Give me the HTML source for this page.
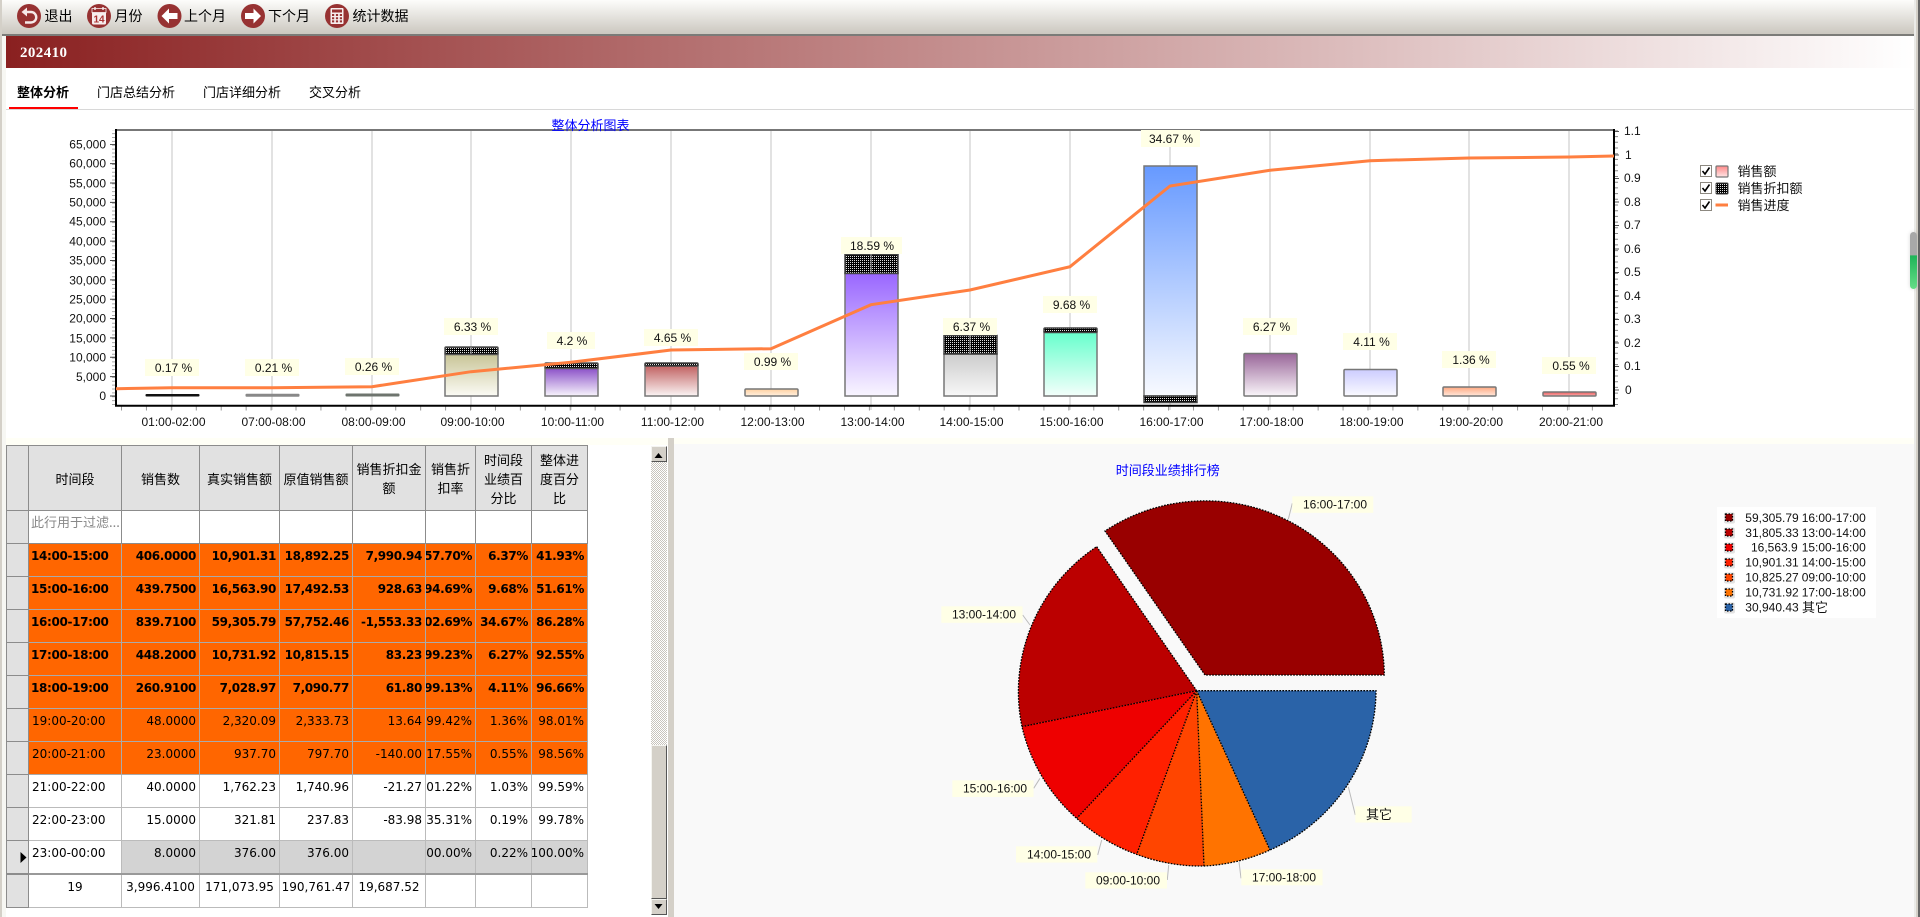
<!DOCTYPE html>
<html lang="zh"><head><meta charset="utf-8"><title>整体分析</title>
<style>
html,body{margin:0;padding:0;width:1920px;height:917px;overflow:hidden;background:#fff}
body{position:relative;font-family:"WenQuanYi Zen Hei","Noto Sans CJK SC",sans-serif;font-size:13px;color:#000}
.a{position:absolute}
svg{position:absolute;left:0;top:0}
svg text{font-family:"Liberation Sans","WenQuanYi Zen Hei",sans-serif;font-size:12px;fill:#111}
svg text.c{font-family:"WenQuanYi Zen Hei","Noto Sans CJK SC",sans-serif;font-size:13px}
.tb{font-family:"WenQuanYi Zen Hei","Noto Sans CJK SC",sans-serif;font-size:14px;position:absolute;top:7px;line-height:18px;white-space:nowrap}
.tab{position:absolute;top:84px;line-height:16px;font-size:13px;white-space:nowrap}
table{position:absolute;left:6px;top:445px;border-collapse:collapse;table-layout:fixed;width:581px;background:#fff}
td{padding:0;border:1px solid #aaa;overflow:hidden;white-space:nowrap;vertical-align:top;height:33px;box-sizing:border-box}
td.h{background:#e1e1e1;border-color:#8c8c8c;text-align:center;vertical-align:middle;line-height:19px;font-size:13px;height:65px}
td.r{background:#e1e1e1;border-color:#8c8c8c}
td i{font-style:normal;display:flex;justify-content:flex-end;padding:4px 3px 0 0;font:12px/16px "DejaVu Sans",sans-serif;overflow:hidden}
td.t i{justify-content:flex-start;padding:4px 0 0 3px}
td.m i{justify-content:center;padding:4px 0 0 0}
tr.o td:not(.r){background:#f60;border-color:#aaa}
tr.b i{font-weight:bold;letter-spacing:-.35px}
tr.b td.t i{padding-left:2px}
tr.g td:not(.r):not(.t){background:#d3d3d3}
td.f{color:#888;font-size:13px;line-height:16px;padding:3px 0 0 2px;border-color:#8c8c8c}
tr.w td{border-color:#bbb}
tr.w td.r{border-color:#8c8c8c}
tr.s td{border-top:2px solid #999}
.sb{position:absolute;left:651px;width:15.5px;background:#d4d0c8;box-sizing:border-box;border:1px solid;border-color:#f4f4f0 #555 #555 #f4f4f0}
</style></head><body>
<!-- frame -->
<div class="a" style="left:0;top:0;width:2px;height:917px;background:#d4d0c8"></div>
<div class="a" style="left:2px;top:0;width:4px;height:917px;background:#f7f7f3"></div>
<div class="a" style="left:2px;top:0;width:1912px;height:34px;background:linear-gradient(#fdfdfb,#cbc7bf)"></div>
<div class="a" style="left:2px;top:34px;width:1912px;height:1.5px;background:#7b7b78"></div>
<div class="a" style="left:6px;top:36px;width:1908px;height:32px;background:linear-gradient(90deg,#8a2020,#fff);color:#fff;font:bold 15px/34px 'Liberation Serif',serif;letter-spacing:.4px"><span style="position:absolute;left:14px;top:0">202410</span></div>
<div class="a" style="left:6px;top:109px;width:1908px;height:1px;background:#d8d8d8"></div>
<div class="a" style="left:9px;top:107px;width:69px;height:2px;background:#f00"></div>
<div class="tab" style="left:17px;font-weight:bold">整体分析</div>
<div class="tab" style="left:97px">门店总结分析</div>
<div class="tab" style="left:203px">门店详细分析</div>
<div class="tab" style="left:309px">交叉分析</div>
<div class="tb" style="left:44.500px">退出</div>
<div class="tb" style="left:114.500px">月份</div>
<div class="tb" style="left:184px">上个月</div>
<div class="tb" style="left:268px">下个月</div>
<div class="tb" style="left:352.500px">统计数据</div>
<!-- lower areas -->
<div class="a" style="left:6px;top:438px;width:1908px;height:7px;background:#fffff6"></div>
<div class="a" style="left:668px;top:438px;width:6px;height:479px;background:#d4d0c8"></div>
<div class="a" style="left:674px;top:444px;width:1240px;height:473px;background:#f9f9f9"></div>
<div class="a" style="left:1717px;top:507px;width:159px;height:111px;background:#fff"></div>
<div class="a" style="left:1914px;top:0;width:2px;height:917px;background:#ebebe8"></div>
<div class="a" style="left:1916px;top:0;width:2px;height:917px;background:#d4d0c8"></div>
<div class="a" style="left:1918px;top:0;width:2px;height:917px;background:#666"></div>
<!-- table -->
<table><colgroup><col style="width:22px"><col style="width:93px"><col style="width:78px"><col style="width:80px"><col style="width:73px"><col style="width:73px"><col style="width:50px"><col style="width:56px"><col style="width:56px"></colgroup>
<tr><td class="h"></td><td class="h">时间段</td><td class="h">销售数</td><td class="h">真实销售额</td><td class="h">原值销售额</td><td class="h">销售折扣金<br>额</td><td class="h">销售折<br>扣率</td><td class="h">时间段<br>业绩百<br>分比</td><td class="h">整体进<br>度百分<br>比</td></tr>
<tr><td class="r"></td><td class="f">此行用于过滤...</td><td style="border-color:#8c8c8c"></td><td style="border-color:#8c8c8c"></td><td style="border-color:#8c8c8c"></td><td style="border-color:#8c8c8c"></td><td style="border-color:#8c8c8c"></td><td style="border-color:#8c8c8c"></td><td style="border-color:#8c8c8c"></td></tr>
<tr class="o b"><td class="r"></td><td class="t"><i>14:00-15:00</i></td><td><i>406.0000</i></td><td><i>10,901.31</i></td><td><i>18,892.25</i></td><td><i>7,990.94</i></td><td><i>57.70%</i></td><td><i>6.37%</i></td><td><i>41.93%</i></td></tr>
<tr class="o b"><td class="r"></td><td class="t"><i>15:00-16:00</i></td><td><i>439.7500</i></td><td><i>16,563.90</i></td><td><i>17,492.53</i></td><td><i>928.63</i></td><td><i>94.69%</i></td><td><i>9.68%</i></td><td><i>51.61%</i></td></tr>
<tr class="o b"><td class="r"></td><td class="t"><i>16:00-17:00</i></td><td><i>839.7100</i></td><td><i>59,305.79</i></td><td><i>57,752.46</i></td><td><i>-1,553.33</i></td><td><i>102.69%</i></td><td><i>34.67%</i></td><td><i>86.28%</i></td></tr>
<tr class="o b"><td class="r"></td><td class="t"><i>17:00-18:00</i></td><td><i>448.2000</i></td><td><i>10,731.92</i></td><td><i>10,815.15</i></td><td><i>83.23</i></td><td><i>99.23%</i></td><td><i>6.27%</i></td><td><i>92.55%</i></td></tr>
<tr class="o b"><td class="r"></td><td class="t"><i>18:00-19:00</i></td><td><i>260.9100</i></td><td><i>7,028.97</i></td><td><i>7,090.77</i></td><td><i>61.80</i></td><td><i>99.13%</i></td><td><i>4.11%</i></td><td><i>96.66%</i></td></tr>
<tr class="o"><td class="r"></td><td class="t"><i>19:00-20:00</i></td><td><i>48.0000</i></td><td><i>2,320.09</i></td><td><i>2,333.73</i></td><td><i>13.64</i></td><td><i>99.42%</i></td><td><i>1.36%</i></td><td><i>98.01%</i></td></tr>
<tr class="o"><td class="r"></td><td class="t"><i>20:00-21:00</i></td><td><i>23.0000</i></td><td><i>937.70</i></td><td><i>797.70</i></td><td><i>-140.00</i></td><td><i>117.55%</i></td><td><i>0.55%</i></td><td><i>98.56%</i></td></tr>
<tr class="w"><td class="r"></td><td class="t"><i>21:00-22:00</i></td><td><i>40.0000</i></td><td><i>1,762.23</i></td><td><i>1,740.96</i></td><td><i>-21.27</i></td><td><i>101.22%</i></td><td><i>1.03%</i></td><td><i>99.59%</i></td></tr>
<tr class="w"><td class="r"></td><td class="t"><i>22:00-23:00</i></td><td><i>15.0000</i></td><td><i>321.81</i></td><td><i>237.83</i></td><td><i>-83.98</i></td><td><i>135.31%</i></td><td><i>0.19%</i></td><td><i>99.78%</i></td></tr>
<tr class="w g"><td class="r"></td><td class="t"><i>23:00-00:00</i></td><td><i>8.0000</i></td><td><i>376.00</i></td><td><i>376.00</i></td><td><i></i></td><td><i>100.00%</i></td><td><i>0.22%</i></td><td><i>100.00%</i></td></tr>
<tr class="w s"><td class="r" style="height:34px"></td><td class="m"><i>19</i></td><td class="m"><i>3,996.4100</i></td><td class="m"><i>171,073.95</i></td><td class="m"><i>190,761.47</i></td><td class="m"><i>19,687.52</i></td><td></td><td></td><td></td></tr>
</table>
<div class="a" style="left:651px;top:462px;width:15.5px;height:283px;background:conic-gradient(#c8c4bc 25%,#fff 0 50%,#c8c4bc 0 75%,#fff 0) 0 0/2px 2px"></div>
<div class="sb" style="top:446px;height:16px"></div>
<div class="sb" style="top:745px;height:154px"></div>
<div class="sb" style="top:899px;height:16px"></div>
<!-- right overlay scrollbar -->
<div class="a" style="left:1910px;top:232px;width:7px;height:57px;border-radius:4px;background:linear-gradient(#a8a8a8 0,#a8a8a8 40%,#1fb558 42%,#66dd88 100%);box-shadow:0 0 4px rgba(0,0,0,.15)"></div>

<svg width="1920" height="917" viewBox="0 0 1920 917" xmlns="http://www.w3.org/2000/svg">
<defs>
<pattern id="d" width="2" height="2" patternUnits="userSpaceOnUse"><rect width="2" height="2" fill="#000"/><rect width="1" height="1" fill="#ddd"/></pattern>
<linearGradient id="g1" x1="0" y1="0" x2="0" y2="1"><stop offset="0" stop-color="#c8c496"/><stop offset="1" stop-color="#fbfbf5"/></linearGradient>
<linearGradient id="g2" x1="0" y1="0" x2="0" y2="1"><stop offset="0" stop-color="#8a50c8"/><stop offset="1" stop-color="#f8f4fc"/></linearGradient>
<linearGradient id="g3" x1="0" y1="0" x2="0" y2="1"><stop offset="0" stop-color="#c06060"/><stop offset="1" stop-color="#fbf4f4"/></linearGradient>
<linearGradient id="g4" x1="0" y1="0" x2="0" y2="1"><stop offset="0" stop-color="#ffd0a0"/><stop offset="1" stop-color="#fff0e0"/></linearGradient>
<linearGradient id="g5" x1="0" y1="0" x2="0" y2="1"><stop offset="0" stop-color="#9966ff"/><stop offset="1" stop-color="#f9f6ff"/></linearGradient>
<linearGradient id="g6" x1="0" y1="0" x2="0" y2="1"><stop offset="0" stop-color="#cccccc"/><stop offset="1" stop-color="#f8f8f8"/></linearGradient>
<linearGradient id="g7" x1="0" y1="0" x2="0" y2="1"><stop offset="0" stop-color="#66ffcc"/><stop offset="1" stop-color="#f4fffb"/></linearGradient>
<linearGradient id="g8" x1="0" y1="0" x2="0" y2="1"><stop offset="0" stop-color="#6699ff"/><stop offset="1" stop-color="#f8faff"/></linearGradient>
<linearGradient id="g9" x1="0" y1="0" x2="0" y2="1"><stop offset="0" stop-color="#996699"/><stop offset="1" stop-color="#faf6fa"/></linearGradient>
<linearGradient id="g10" x1="0" y1="0" x2="0" y2="1"><stop offset="0" stop-color="#ccccff"/><stop offset="1" stop-color="#fafaff"/></linearGradient>
<linearGradient id="g11" x1="0" y1="0" x2="0" y2="1"><stop offset="0" stop-color="#ffa880"/><stop offset="1" stop-color="#ffe8dc"/></linearGradient>
<linearGradient id="g12" x1="0" y1="0" x2="0" y2="1"><stop offset="0" stop-color="#e85858"/><stop offset="1" stop-color="#fcb0b0"/></linearGradient>
<linearGradient id="g13" x1="0" y1="0" x2="0" y2="1"><stop offset="0" stop-color="#ff8888"/><stop offset="1" stop-color="#ffe6e6"/></linearGradient>
</defs>

<!-- toolbar icons -->
<g fill="#973232">
<circle cx="29" cy="16" r="12"/><circle cx="99" cy="16" r="12"/><circle cx="169.5" cy="16" r="12"/><circle cx="253" cy="16" r="12"/><circle cx="337" cy="16" r="12"/>
</g>
<g transform="translate(17,4)"><path d="M8.5 8h5.5a5 5 0 0 1 0 10.5H8" fill="none" stroke="#f6eaea" stroke-width="2.4"/><path d="M10 3.5L4.5 8l5.5 4.500z" fill="#f6eaea"/></g>
<g transform="translate(87,4)"><rect x="5" y="4.500" width="14" height="16" rx="1.500" fill="#f7eeee"/><rect x="5" y="4.500" width="14" height="4" fill="#973232" stroke="#f7eeee" stroke-width=".8"/><path d="M8 3v3M16 3v3" stroke="#f7eeee" stroke-width="1.400"/><text x="12" y="18.500" text-anchor="middle" style="font-size:10px;font-weight:bold;fill:#a33">14</text></g>
<g transform="translate(157.5,4)"><path d="M4 12l7.500-7.500V9H20v6h-8.500v4.500z" fill="#fff"/></g>
<g transform="translate(241,4)"><path d="M20 12l-7.500-7.500V9H4v6h8.500v4.500z" fill="#fff"/></g>
<g transform="translate(325,4)"><rect x="5.500" y="4" width="13" height="16" rx="1" fill="#f7eeee"/><rect x="7" y="5.500" width="10" height="3" fill="#973232"/><path d="M7 10h2.200v2H7zM10.900 10h2.200v2h-2.200zM14.800 10H17v2h-2.200zM7 13.200h2.200v2H7zM10.900 13.200h2.200v2h-2.200zM14.800 13.200H17v2h-2.200zM7 16.400h2.200v2H7zM10.900 16.400h2.200v2h-2.200zM14.800 16.400H17v2h-2.200z" fill="#973232"/></g>

<!-- chart gridlines -->
<path d="M172 130V410M272 130V410M372 130V410M471 130V410M571 130V410M671 130V410M771 130V410M871 130V410M970 130V410M1070 130V410M1170 130V410M1270 130V410M1370 130V410M1469 130V410M1569 130V410" stroke="#d8d8d8" stroke-width="1.500" fill="none"/>
<!-- ticks -->
<path d="M113.500 405V130" stroke="#aaa" stroke-width="3" stroke-dasharray="1 2.870"/>
<path d="M112.500 396.500V144" stroke="#444" stroke-width="5" stroke-dasharray="1 18.360"/>
<path d="M121 408.500H1614" stroke="#999" stroke-width="4" stroke-dasharray="1 23.930"/>
<path d="M1616.500 405V130" stroke="#888" stroke-width="3" stroke-dasharray="1 4.700"/>
<path d="M1617 390.500V130" stroke="#555" stroke-width="4" stroke-dasharray="1 22.500"/>

<!-- bars -->
<rect x="145.500" y="394" width="54" height="2.500" rx="1" fill="#111"/>
<rect x="245.500" y="393.800" width="54" height="3" rx="1" fill="#888"/>
<rect x="345.500" y="393.500" width="54" height="3" rx="1" fill="#6e746e"/>
<g stroke="#777" stroke-width="1.500">
<rect x="445" y="354" width="53" height="42" fill="url(#g1)"/><rect x="445" y="347" width="53" height="7.500" rx="1" fill="url(#d)" stroke="#555"/>
<rect x="545" y="368" width="53" height="28" fill="url(#g2)"/><rect x="545" y="363" width="53" height="5.500" rx="1" fill="url(#d)" stroke="#555"/>
<rect x="645" y="365.500" width="53" height="30.500" fill="url(#g3)"/><rect x="645" y="363" width="53" height="3" rx="1" fill="url(#d)" stroke="#444"/>
<rect x="745" y="389" width="53" height="7" rx="1" fill="url(#g4)"/>
<rect x="845" y="273" width="53" height="123" fill="url(#g5)"/><rect x="845" y="254.500" width="53" height="19" fill="url(#d)" stroke="#444"/>
<rect x="944" y="354" width="53" height="42" fill="url(#g6)"/><rect x="944" y="335.500" width="53" height="18.500" fill="url(#d)" stroke="#444"/>
<rect x="1044" y="332" width="53" height="64" fill="url(#g7)"/><rect x="1044" y="328" width="53" height="4.500" rx="1" fill="url(#d)" stroke="#444"/>
<rect x="1144" y="166" width="53" height="230" fill="url(#g8)"/><rect x="1144" y="396" width="53" height="6.500" fill="url(#d)" stroke="#444"/>
<rect x="1244" y="353.500" width="53" height="42.500" rx="1" fill="url(#g9)"/>
<rect x="1344" y="369.500" width="53" height="26.500" rx="1" fill="url(#g10)"/>
<rect x="1443" y="387" width="53" height="9" rx="1" fill="url(#g11)"/>
<rect x="1543" y="392" width="53" height="4" rx="1" fill="url(#g12)"/>
</g>
<!-- grid overlay on patterned bars -->
<path d="M471 347V354M871 254V273M970 335V354" stroke="#aaa" stroke-width="1"/>
<!-- frame -->
<path d="M116 130H1614" stroke="#777" stroke-width="2"/>
<path d="M116 129V406.700M115 405.700H1615M1614 129V406.700" stroke="#000" stroke-width="2" fill="none"/>
<!-- progress line -->
<polyline points="116,388.700 172,387.700 272,387.700 372,386.700 471,371.700 571,362.300 671,350 771,348.700 871,304.700 970,290 1070,266.700 1170,186 1270,170.300 1370,160.700 1469,158 1569,157 1614,156" fill="none" stroke="#ff7f40" stroke-width="3"/>
<!-- % labels -->
<g fill="#ffffe6">
<rect x="145" y="359" width="54" height="17"/><rect x="245" y="359" width="54" height="17"/><rect x="345" y="358" width="54" height="17"/>
<rect x="444" y="318" width="54" height="17"/><rect x="547" y="332" width="48" height="17"/><rect x="644" y="329" width="54" height="17"/>
<rect x="744" y="353" width="54" height="17"/><rect x="841" y="237" width="61" height="17"/><rect x="943" y="318" width="54" height="17"/>
<rect x="1043" y="296" width="54" height="17"/><rect x="1141" y="130" width="59" height="17"/><rect x="1243" y="318" width="54" height="17"/>
<rect x="1343" y="333" width="54" height="17"/><rect x="1442" y="351" width="54" height="17"/><rect x="1542" y="357" width="54" height="17"/>
</g>
<g text-anchor="middle">
<text x="173.500" y="372">0.17 %</text><text x="273.500" y="372">0.21 %</text><text x="373.500" y="371">0.26 %</text>
<text x="472.500" y="331">6.33 %</text><text x="572" y="345">4.2 %</text><text x="672.500" y="342">4.65 %</text>
<text x="772.500" y="366">0.99 %</text><text x="872" y="250">18.59 %</text><text x="971.500" y="331">6.37 %</text>
<text x="1071.500" y="309">9.68 %</text><text x="1171" y="143">34.67 %</text><text x="1271.500" y="331">6.27 %</text>
<text x="1371.500" y="346">4.11 %</text><text x="1471" y="364">1.36 %</text><text x="1571" y="370">0.55 %</text>
</g>
<!-- x labels -->
<g text-anchor="middle">
<text x="173.500" y="426">01:00-02:00</text><text x="273.500" y="426">07:00-08:00</text><text x="373.500" y="426">08:00-09:00</text><text x="472.500" y="426">09:00-10:00</text><text x="572.500" y="426">10:00-11:00</text><text x="672.500" y="426">11:00-12:00</text><text x="772.500" y="426">12:00-13:00</text><text x="872.500" y="426">13:00-14:00</text><text x="971.500" y="426">14:00-15:00</text><text x="1071.500" y="426">15:00-16:00</text><text x="1171.500" y="426">16:00-17:00</text><text x="1271.500" y="426">17:00-18:00</text><text x="1371.500" y="426">18:00-19:00</text><text x="1471" y="426">19:00-20:00</text><text x="1571" y="426">20:00-21:00</text>
</g>
<!-- y labels -->
<g text-anchor="end">
<text x="106" y="148.500">65,000</text><text x="106" y="167.500">60,000</text><text x="106" y="187.500">55,000</text><text x="106" y="206.500">50,000</text><text x="106" y="225.500">45,000</text><text x="106" y="245.500">40,000</text><text x="106" y="264.500">35,000</text><text x="106" y="284.500">30,000</text><text x="106" y="303.500">25,000</text><text x="106" y="322.500">20,000</text><text x="106" y="342.500">15,000</text><text x="106" y="361.500">10,000</text><text x="106" y="381">5,000</text><text x="106" y="400">0</text>
</g>
<g>
<text x="1624" y="135">1.1</text><text x="1625" y="159">1</text><text x="1624" y="182">0.9</text><text x="1624" y="206">0.8</text><text x="1624" y="229">0.7</text><text x="1624" y="253">0.6</text><text x="1624" y="276">0.5</text><text x="1624" y="300">0.4</text><text x="1624" y="323">0.3</text><text x="1624" y="347">0.2</text><text x="1624" y="370">0.1</text><text x="1625" y="394">0</text>
</g>
<text class="c" x="551.500" y="130" style="fill:#00f">整体分析图表</text>

<!-- chart legend -->
<g fill="#fff" stroke="#8c8880" stroke-width="1"><rect x="1700.500" y="165.500" width="11" height="11"/><rect x="1700.500" y="182.500" width="11" height="11"/><rect x="1700.500" y="199.500" width="11" height="11"/></g>
<path d="M1702.500 171l2.500 3 4.500-6.500M1702.500 188l2.500 3 4.500-6.500M1702.500 205l2.500 3 4.500-6.500" fill="none" stroke="#000" stroke-width="1.600"/>
<rect x="1716" y="166" width="12" height="11" rx="1" fill="url(#g13)" stroke="#777" stroke-width="1.200"/>
<rect x="1716" y="183" width="12" height="11" rx="1" fill="url(#d)" stroke="#444" stroke-width="1"/>
<path d="M1715.500 205H1728" stroke="#ff7f40" stroke-width="3"/>
<text class="c" x="1737.500" y="176">销售额</text><text class="c" x="1737.500" y="193">销售折扣额</text><text class="c" x="1737.500" y="210">销售进度</text>

<!-- row indicator -->
<path d="M20.500 852l6 5.500-6 5.500z" fill="#000"/>
<!-- scrollbar arrows -->
<path d="M654.500 458h8l-4-5z" fill="#000"/>
<path d="M654.500 904h8l-4 5z" fill="#000"/>

<!-- pie -->
<text class="c" x="1115.700" y="475" style="fill:#00f">时间段业绩排行榜</text>
<g stroke="#bbb" stroke-width="1" fill="none"><path d="M1292.300 503.300L1288.300 519.300M1022.700 615L1030 625M1033.700 788.300L1040 778.300M1097.700 855L1101.700 840M1167.300 880L1168.700 865M1241 878.300L1239 861.700M1355.300 815L1348.300 786.700"/></g>
<path d="M1196.670 690.670L1376 690.670A179 175.500 0 0 1 1270 850Z" fill="#2a63a8"/>
<path d="M1196.670 690.670L1270 850A179 175.500 0 0 1 1204 866Z" fill="#ff7300"/>
<path d="M1196.670 690.670L1204 866A179 175.500 0 0 1 1136.670 854.330Z" fill="#ff4500"/>
<path d="M1196.670 690.670L1136.670 854.330A179 175.500 0 0 1 1076.670 818.330Z" fill="#ff2000"/>
<path d="M1196.670 690.670L1076.670 818.330A179 175.500 0 0 1 1022 726.670Z" fill="#ee0000"/>
<path d="M1196.670 690.670L1022 726.670A179 175.500 0 0 1 1096.670 546.670Z" fill="#bb0000"/>
<path d="M1205 675L1105 531A179 175.500 0 0 1 1384.300 675Z" fill="#990000"/>
<g stroke="#000" stroke-width="1.300" stroke-dasharray="1.700 1.300" fill="none">
<path d="M1096.670 546.670L1196.670 690.670L1376 690.670A179 175.500 0 0 1 1270 850A179 175.500 0 0 1 1204 866A179 175.500 0 0 1 1136.670 854.330A179 175.500 0 0 1 1076.670 818.330A179 175.500 0 0 1 1022 726.670A179 175.500 0 0 1 1096.670 546.670"/>
<path d="M1196.670 690.670L1270 850M1196.670 690.670L1204 866M1196.670 690.670L1136.670 854.330M1196.670 690.670L1076.670 818.330M1196.670 690.670L1022 726.670"/>
<path d="M1205 675L1105 531A179 175.500 0 0 1 1384.300 675Z"/>
</g>
<g fill="#ffffe6">
<rect x="1292.300" y="496.300" width="81" height="16.500"/><rect x="941.300" y="606.300" width="81.300" height="16.500"/><rect x="952.300" y="780.300" width="81.300" height="16.700"/><rect x="1016" y="846.300" width="81.300" height="16.300"/><rect x="1085.300" y="872.300" width="81.700" height="16.300"/><rect x="1241.300" y="869.300" width="81.300" height="16"/><rect x="1355.300" y="806.300" width="56.400" height="16.300"/>
</g>
<g text-anchor="middle">
<text x="1335" y="508.500">16:00-17:00</text><text x="984" y="618.500">13:00-14:00</text><text x="995" y="792.500">15:00-16:00</text><text x="1059" y="858.500">14:00-15:00</text><text x="1128" y="884.500">09:00-10:00</text><text x="1284" y="881.500">17:00-18:00</text>
</g>
<text class="c" x="1366" y="819">其它</text>

<!-- pie legend -->
<g fill="#e2e2e2"><rect x="1724" y="512.500" width="11" height="11" rx="2"/><rect x="1724" y="527.500" width="11" height="11" rx="2"/><rect x="1724" y="542.500" width="11" height="11" rx="2"/><rect x="1724" y="557.500" width="11" height="11" rx="2"/><rect x="1724" y="572.500" width="11" height="11" rx="2"/><rect x="1724" y="587.500" width="11" height="11" rx="2"/><rect x="1724" y="602.500" width="11" height="11" rx="2"/></g>
<g stroke="#000" stroke-width="1.300" stroke-dasharray="1.500 1.500">
<rect x="1725.500" y="514" width="7" height="7" fill="#990000"/>
<rect x="1725.500" y="529" width="7" height="7" fill="#bb0000"/>
<rect x="1725.500" y="544" width="7" height="7" fill="#ee0000"/>
<rect x="1725.500" y="559" width="7" height="7" fill="#ff2000"/>
<rect x="1725.500" y="574" width="7" height="7" fill="#ff4500"/>
<rect x="1725.500" y="589" width="7" height="7" fill="#ff7300"/>
<rect x="1725.500" y="604" width="7" height="7" fill="#2a63a8"/>
</g>
<g text-anchor="end">
<text x="1798.700" y="522">59,305.79</text><text x="1798.700" y="537">31,805.33</text><text x="1797.700" y="551.500">16,563.9</text><text x="1798.700" y="566.500">10,901.31</text><text x="1798.700" y="581.500">10,825.27</text><text x="1798.700" y="596.500">10,731.92</text><text x="1798.700" y="611.500">30,940.43</text>
</g>
<g>
<text x="1801.700" y="522">16:00-17:00</text><text x="1801.700" y="537">13:00-14:00</text><text x="1801.700" y="551.500">15:00-16:00</text><text x="1801.700" y="566.500">14:00-15:00</text><text x="1801.700" y="581.500">09:00-10:00</text><text x="1801.700" y="596.500">17:00-18:00</text>
</g>
<text class="c" x="1802" y="612">其它</text>
</svg>
</body></html>
